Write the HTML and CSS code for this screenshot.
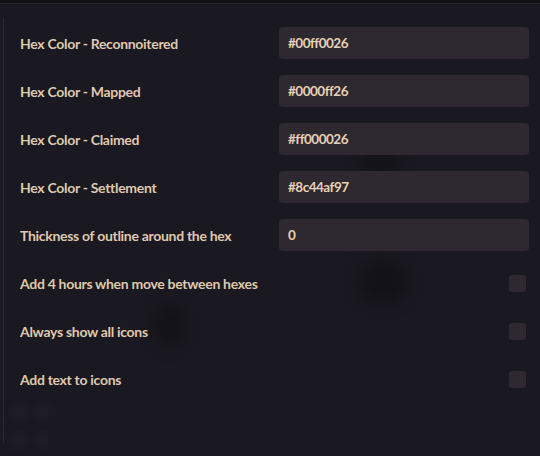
FILE: index.html
```html
<!DOCTYPE html>
<html lang="en">
<head>
<meta charset="utf-8">
<title>Hex settings</title>
<link rel="stylesheet" href="styles.css">
</head>
<body>
<div class="topbar"></div>
<div class="decor" aria-hidden="true">
  <span class="blob b1"></span>
  <span class="blob b2"></span>
  <span class="blob b3"></span>
  <span class="blob sq s1"></span>
  <span class="blob sq s2"></span>
  <span class="blob sq s3"></span>
  <span class="blob sq s4"></span>
</div>
<main class="panel">
  <div class="row"><label class="label">Hex Color - Reconnoitered</label><div class="input">#00ff0026</div></div>
  <div class="row"><label class="label">Hex Color - Mapped</label><div class="input">#0000ff26</div></div>
  <div class="row"><label class="label">Hex Color - Claimed</label><div class="input">#ff000026</div></div>
  <div class="row"><label class="label">Hex Color - Settlement</label><div class="input">#8c44af97</div></div>
  <div class="row"><label class="label">Thickness of outline around the hex</label><div class="input">0</div></div>
  <div class="row"><label class="label">Add 4 hours when move between hexes</label><span class="check"></span></div>
  <div class="row"><label class="label">Always show all icons</label><span class="check"></span></div>
  <div class="row"><label class="label">Add text to icons</label><span class="check"></span></div>
</main>
</body>
</html>
```
FILE: styles.css
```css
html, body {
  margin: 0;
  padding: 0;
}
body {
  background: #1a1820;
  width: 540px;
  height: 456px;
  overflow: hidden;
  position: relative;
  font-family: "Lato", "Noto Sans", sans-serif;
}
.topbar {
  height: 3px;
  background: #111015;
  border-bottom: 1px solid #2a2229;
}
.decor {
  position: absolute;
  inset: 0;
  pointer-events: none;
}
.blob {
  position: absolute;
  border-radius: 50%;
  background: #0e0d11;
  filter: blur(9px);
  opacity: 0.6;
}
.b1 { left: 362px; top: 150px; width: 36px; height: 26px; }
.b2 { left: 360px; top: 262px; width: 46px; height: 40px; }
.b3 { left: 158px; top: 305px; width: 24px; height: 40px; }
.sq {
  border-radius: 4px;
  background: #222028;
  filter: blur(4px);
  opacity: 0.8;
}
.s1 { left: 12px; top: 406px; width: 14px; height: 14px; }
.s2 { left: 36px; top: 406px; width: 14px; height: 14px; }
.s3 { left: 12px; top: 434px; width: 14px; height: 14px; }
.s4 { left: 36px; top: 434px; width: 14px; height: 14px; }
.panel {
  position: relative;
  margin-left: 3px;
  margin-top: 14px;
  border-left: 1px solid #2a2831;
  padding: 1px 11px 40px 16px;
  display: flex;
  flex-direction: column;
}
.row {
  display: grid;
  grid-template-columns: 1fr 250px;
  align-items: center;
  height: 48px;
}
.label {
  color: #dfc8ae;
  font-weight: 700;
  font-size: 14px;
  letter-spacing: -0.3px;
}
.input {
  height: 32px;
  box-sizing: border-box;
  padding: 0 9px;
  display: flex;
  align-items: center;
  background: #2e2830;
  border-radius: 4px;
  color: #e6d1b4;
  font-weight: 700;
  font-size: 13.5px;
  letter-spacing: -0.5px;
}
.check {
  justify-self: end;
  margin-right: 3px;
  width: 17px;
  height: 17px;
  border-radius: 3px;
  background: #2e2830;
}
```
